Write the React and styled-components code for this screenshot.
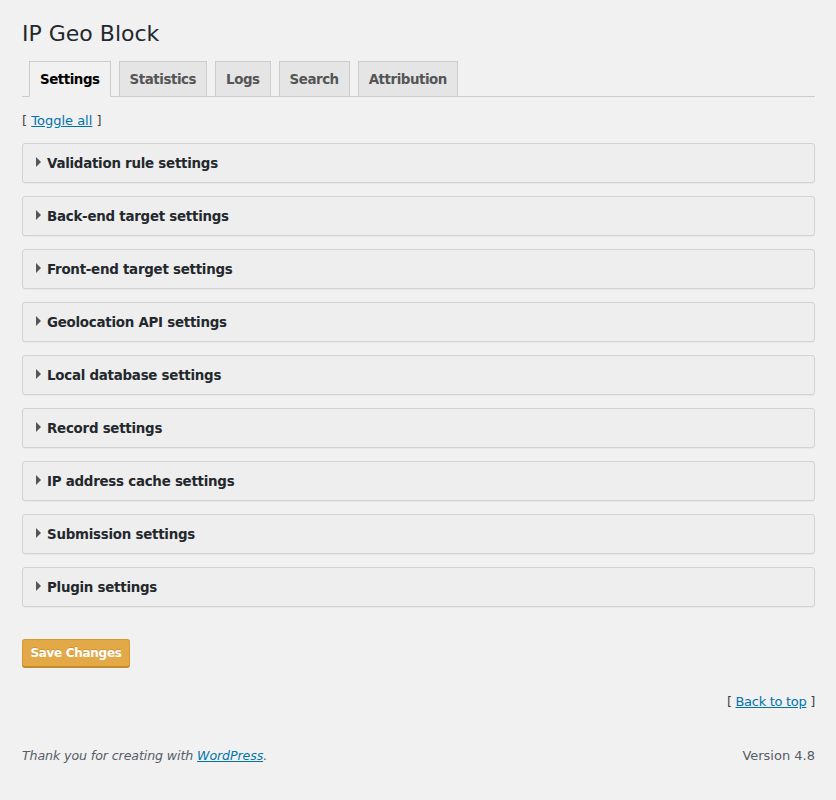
import React from "react";
import styled, { createGlobalStyle } from "styled-components";

const Global = createGlobalStyle`
  html, body { margin: 0; padding: 0; background: #f1f1f1; }
  body { font-family: "DejaVu Sans", "Liberation Sans", sans-serif; color: #444; font-size: 13px; }
`;

const Wrap = styled.div`
  padding: 19px 21px 0 22px;
  min-height: 800px;
  box-sizing: border-box;
`;

const Title = styled.h1`
  margin: 0;
  font-size: 22px;
  font-weight: 400;
  line-height: 30px;
  color: #23282d;
`;

const TabBar = styled.nav`
  display: flex;
  gap: 8px;
  margin-top: 12px;
  padding-left: 7px;
  border-bottom: 1px solid #ccc;
  height: 35px;
  align-items: flex-end;
`;

const Tab = styled.a`
  box-sizing: border-box;
  height: ${p => (p.$active ? "36px" : "35px")};
  margin-bottom: ${p => (p.$active ? "-1px" : "0")};
  padding: 0 10px;
  display: flex;
  align-items: center;
  font-size: 13.4px;
  font-weight: 700;
  letter-spacing: -0.45px;
  color: ${p => (p.$active ? "#000" : "#555")};
  background: ${p => (p.$active ? "#f1f1f1" : "#e5e5e5")};
  border: 1px solid #ccc;
  border-bottom: ${p => (p.$active ? "1px solid #f1f1f1" : "none")};
  text-decoration: none;
`;

const ToggleLine = styled.p`
  margin: 14px 0 0;
  font-size: 13px;
  line-height: 20px;
`;

const Link = styled.a`
  color: #0073aa;
  text-decoration: underline;
`;

const Panels = styled.div`
  display: flex;
  flex-direction: column;
  gap: 13px;
  margin-top: 12px;
`;

const Panel = styled.div`
  box-sizing: border-box;
  height: 40px;
  background: #eeeeee;
  border: 1px solid #d3d3d3;
  border-radius: 3px;
  box-shadow: 0 1px 1px rgba(0,0,0,0.04);
  display: flex;
  align-items: center;
  padding-left: 13px;
  gap: 6px;
`;

const Arrow = styled.span`
  width: 0;
  height: 0;
  border-top: 5px solid transparent;
  border-bottom: 5px solid transparent;
  border-left: 5px solid #555;
  margin-top: -3px;
`;

const PanelTitle = styled.h3`
  margin: 0;
  font-size: 13.4px;
  font-weight: 700;
  letter-spacing: -0.25px;
  color: #23282d;
`;

const SaveButton = styled.button`
  margin-top: 32px;
  box-sizing: border-box;
  width: 108px;
  height: 28px;
  background: #e3a947;
  border: 1px solid #d39a3c;
  border-bottom-color: #c68a2a;
  border-radius: 3px;
  color: #fff;
  font-family: "DejaVu Sans", sans-serif;
  font-size: 12px;
  font-weight: 700;
  letter-spacing: -0.3px;
  padding: 0;
  box-shadow: 0 1px 0 #c68a2a;
  text-shadow: 0 -1px 0 rgba(150,90,0,0.3);
`;

const BackTop = styled.p`
  margin: 25px 0 0;
  text-align: right;
  font-size: 13px;
  line-height: 20px;
  letter-spacing: -0.3px;
`;

const Footer = styled.div`
  margin-top: 34px;
  display: flex;
  justify-content: space-between;
  font-size: 13px;
  line-height: 20px;
  color: #555d66;
`;

const Thanks = styled.span`
  font-style: italic;
  font-size: 12.6px;
  letter-spacing: -0.1px;
`;

const panels = [
  "Validation rule settings",
  "Back-end target settings",
  "Front-end target settings",
  "Geolocation API settings",
  "Local database settings",
  "Record settings",
  "IP address cache settings",
  "Submission settings",
  "Plugin settings",
];

const tabs = ["Settings", "Statistics", "Logs", "Search", "Attribution"];

export default function App() {
  return (
    <>
      <Global />
      <Wrap>
        <Title>IP Geo Block</Title>
        <TabBar>
          {tabs.map((t, i) => (
            <Tab key={t} $active={i === 0} href="#">{t}</Tab>
          ))}
        </TabBar>
        <ToggleLine>[ <Link href="#">Toggle all</Link> ]</ToggleLine>
        <Panels>
          {panels.map(p => (
            <Panel key={p}>
              <Arrow />
              <PanelTitle>{p}</PanelTitle>
            </Panel>
          ))}
        </Panels>
        <SaveButton>Save Changes</SaveButton>
        <BackTop>[ <Link href="#">Back to top</Link> ]</BackTop>
        <Footer>
          <Thanks>Thank you for creating with <Link href="#">WordPress</Link>.</Thanks>
          <span>Version 4.8</span>
        </Footer>
      </Wrap>
    </>
  );
}
